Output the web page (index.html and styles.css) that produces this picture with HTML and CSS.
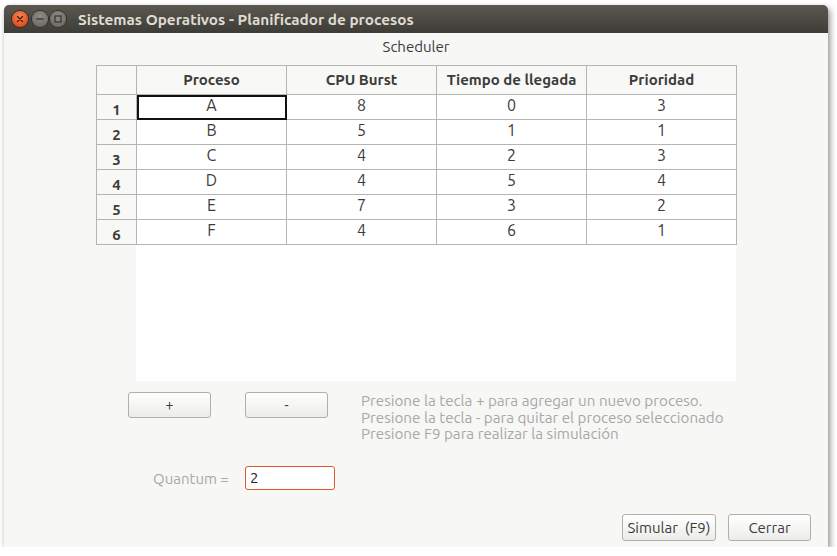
FILE: index.html
```html
<!DOCTYPE html>
<html>
<head>
<meta charset="utf-8">
<link rel="stylesheet" href="styles.css">
</head>
<body>
<div class="window">
  <div class="titlebar">
    <div class="wbtns">
      <span class="wbtn close"><svg width="16" height="16" viewBox="0 0 16 16"><path d="M5.5 5.5 L10.5 10.5 M10.5 5.5 L5.5 10.5" stroke="#4a1a08" stroke-width="1.4" stroke-linecap="round"/></svg></span>
      <span class="wbtn min"><svg width="16" height="16" viewBox="0 0 16 16"><path d="M4.5 8 H11.5" stroke="#3a3935" stroke-width="1.6"/></svg></span>
      <span class="wbtn max"><svg width="16" height="16" viewBox="0 0 16 16"><rect x="5" y="5" width="6" height="6" fill="none" stroke="#3a3935" stroke-width="1.3"/></svg></span>
    </div>
    <div class="title">Sistemas Operativos - Planificador de procesos</div>
  </div>
  <div class="content">
    <div class="caption">Scheduler</div>
    <div class="grid">
      <table class="tbl">
        <colgroup><col class="c-rh"><col class="c"><col class="c"><col class="c"><col class="c"></colgroup>
        <thead>
          <tr><th class="corner"></th><th>Proceso</th><th>CPU Burst</th><th>Tiempo de llegada</th><th>Prioridad</th></tr>
        </thead>
        <tbody>
          <tr><th>1</th><td class="focus">A</td><td>8</td><td>0</td><td>3</td></tr>
          <tr><th>2</th><td>B</td><td>5</td><td>1</td><td>1</td></tr>
          <tr><th>3</th><td>C</td><td>4</td><td>2</td><td>3</td></tr>
          <tr><th>4</th><td>D</td><td>4</td><td>5</td><td>4</td></tr>
          <tr><th>5</th><td>E</td><td>7</td><td>3</td><td>2</td></tr>
          <tr><th>6</th><td>F</td><td>4</td><td>6</td><td>1</td></tr>
        </tbody>
      </table>
      <div class="filler"></div>
    </div>
    <div class="actions">
      <button class="btn small">+</button>
      <button class="btn small">-</button>
      <div class="hints">
        <div>Presione la tecla + para agregar un nuevo proceso.</div>
        <div>Presione la tecla - para quitar el proceso seleccionado</div>
        <div>Presione F9 para realizar la simulación</div>
      </div>
    </div>
    <div class="quantum">
      <label class="qlabel">Quantum =</label>
      <div class="qinput">2</div>
    </div>
    <div class="footer">
      <button class="btn sim">Simular&nbsp; (F9)</button>
      <button class="btn close-btn">Cerrar</button>
    </div>
  </div>
</div>
</body>
</html>
```
FILE: styles.css
```css
html, body {
  margin: 0;
  padding: 0;
  background: #ffffff;
}
body {
  font-family: "Ubuntu", "Open Sans", "DejaVu Sans", sans-serif;
  color: #3c3c3c;
}
.window {
  margin: 5px 0 0 4px;
  width: 824px;
  height: 542px;
  display: flex;
  flex-direction: column;
  border-radius: 5px 5px 0 0;
  overflow: hidden;
  box-shadow: 2px 3px 6px rgba(0,0,0,0.45);
}
.titlebar {
  height: 28px;
  flex: none;
  display: flex;
  align-items: center;
  background: linear-gradient(#5b5850, #3d3c37);
}
.wbtns {
  display: flex;
  align-items: center;
  gap: 2px;
  padding-left: 8px;
}
.wbtn {
  width: 16px;
  height: 16px;
  border-radius: 50%;
  display: block;
  box-sizing: border-box;
}
.wbtn svg { display: block; }
.wbtn.close {
  background: radial-gradient(circle at 50% 35%, #f58a5a, #e0501c 70%, #c8410f);
  box-shadow: 0 0 0 1px #3a2b22;
}
.wbtn.min, .wbtn.max {
  background: radial-gradient(circle at 50% 35%, #8f8d85, #6e6c65 75%, #5d5b55);
  box-shadow: 0 0 0 1px #33322e;
}
.wbtn.min { margin-left: 2px; }
.title {
  margin-left: 12px;
  color: #dfdbd2;
  font-weight: bold;
  font-size: 15.3px;
}
.content {
  flex: 1;
  background: #f7f7f5;
  display: flex;
  flex-direction: column;
}
.caption {
  margin-top: 4px;
  height: 20px;
  line-height: 20px;
  text-align: center;
  font-size: 15px;
  color: #3c3c3c;
}
.grid {
  margin: 8px 0 0 92px;
  width: 640px;
  height: 316px;
  display: flex;
  flex-direction: column;
}
.tbl {
  border-collapse: collapse;
  table-layout: fixed;
  width: 640px;
}
.c-rh { width: 40px; }
.c { width: 150px; }
.tbl th, .tbl td {
  border: 1px solid #b5b5b3;
  padding: 0;
  text-align: center;
  overflow: hidden;
  white-space: nowrap;
}
.tbl thead th {
  height: 28px;
  font-weight: bold;
  font-size: 15px;
  line-height: 18px;
  background: #f8f8f6;
  color: #3c3c3c;
}
.tbl tbody th {
  height: 24px;
  font-weight: bold;
  font-size: 15px;
  line-height: 18px;
  background: #f8f8f6;
  vertical-align: bottom;
}
.tbl tbody td {
  height: 24px;
  font-size: 16px;
  background: #ffffff;
  color: #3c3c3c;
  line-height: 20px;
  vertical-align: top;
}
.tbl td.focus {
  outline: 2px solid #111;
  outline-offset: -2px;
}
.filler {
  flex: 1;
  margin-left: 40px;
  background: #ffffff;
}
.actions {
  margin-top: 11px;
  display: flex;
  align-items: flex-start;
  padding-left: 124px;
}
.btn {
  font-family: inherit;
  box-sizing: border-box;
  border: 1px solid #b2afa9;
  border-radius: 3px;
  background: linear-gradient(#ffffff, #ececea);
  color: #3c3c3c;
  padding: 0;
  margin: 0;
  font-size: 15px;
}
.btn.small {
  width: 83px;
  height: 26px;
  margin-right: 34px;
  font-size: 14px;
}
.hints {
  margin-left: -1px;
  margin-top: 1px;
  font-size: 15.2px;
  line-height: 16.5px;
  color: #a8a8a6;
}
.quantum {
  margin-top: 23px;
  display: flex;
  align-items: center;
  padding-left: 149px;
}
.qlabel {
  width: 92px;
  font-size: 15px;
  color: #a8a8a6;
  padding-top: 2px;
}
.qinput {
  width: 90px;
  height: 24px;
  box-sizing: border-box;
  border: 1px solid #e0582a;
  border-radius: 3px;
  background: #fff;
  font-size: 15px;
  line-height: 22px;
  padding-left: 4px;
  color: #222;
}
.footer {
  margin-top: auto;
  margin-bottom: 6px;
  display: flex;
  justify-content: flex-end;
  gap: 12px;
  padding-right: 17px;
}
.btn.sim { width: 94px; height: 27px; }
.btn.close-btn { width: 83px; height: 27px; }
```
